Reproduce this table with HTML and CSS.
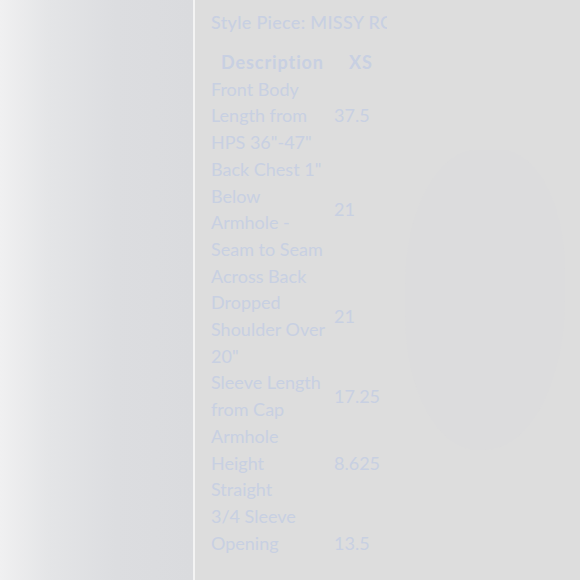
FILE: index.html
```html
<!DOCTYPE html>
<html>
<head>
    <title>Style Piece</title>
    <link rel="stylesheet" href="styles.css">
</head>
<body>
    <div class="sidebar"></div>
    <div class="main">
        <div class="backdrop"></div>
        <div class="sheet">
            <h2 class="title">Style Piece: MISSY ROUND NECK</h2>
            <table class="spec">
                <tr>
                    <th>Description</th>
                    <th>XS</th>
                </tr>
                <tr>
                    <td>Front Body Length from HPS 36"-47"</td>
                    <td>37.5</td>
                </tr>
                <tr>
                    <td>Back Chest 1" Below Armhole - Seam to Seam</td>
                    <td>21</td>
                </tr>
                <tr>
                    <td>Across Back Dropped Shoulder Over 20"</td>
                    <td>21</td>
                </tr>
                <tr>
                    <td>Sleeve Length from Cap</td>
                    <td>17.25</td>
                </tr>
                <tr>
                    <td>Armhole Height Straight</td>
                    <td>8.625</td>
                </tr>
                <tr class="last">
                    <td>3/4 Sleeve Opening</td>
                    <td>13.5</td>
                </tr>
            </table>
        </div>
    </div>
</body>
</html>
```

FILE: styles.css
```css
body {
    margin: 0;
    height: 580px;
    display: flex;
    overflow: hidden;
    font-family: Lato, "Noto Sans", sans-serif;
    background-color: #dddddd;
}
/* Left gradient panel */
.sidebar {
    width: 193px;
    flex-shrink: 0;
    background: linear-gradient(to right, #f0f0f1 0%, #e4e5e7 25%, #dcdde0 60%, #dadbde 100%);
    border-right: 2px solid #f3f3f3;
}
.main {
    flex: 1;
    position: relative;
    background-color: #dddddd;
}
/* faint shape behind the sheet */
.backdrop {
    position: absolute;
    left: 210px;
    top: 150px;
    width: 160px;
    height: 300px;
    border-radius: 45% 40% 50% 45%;
    background-color: #dcdcdd;
}
.sheet {
    position: relative;
    width: 176px;
    margin-left: 16px;
    overflow: hidden;
    color: #c8d0e2;
}
.title {
    margin: 9px 0 0;
    font-size: 18px;
    font-weight: 500;
    line-height: 26px;
    letter-spacing: 0.3px;
    white-space: nowrap;
}
.spec {
    margin-top: 14px;
    border-collapse: collapse;
    font-size: 18px;
    line-height: 26.7px;
}
.spec th {
    font-weight: 700;
    padding: 0;
    text-align: center;
    letter-spacing: 0.9px;
}
.spec td {
    padding: 0;
    vertical-align: middle;
}
.spec td:first-child {
    width: 118px;
    padding-right: 5px;
}
.spec th:last-child {
    padding-left: 15px;
    text-align: left;
}
/* last row has an empty line below its text */
.spec tr.last td:first-child {
    padding-bottom: 27px;
}
```
